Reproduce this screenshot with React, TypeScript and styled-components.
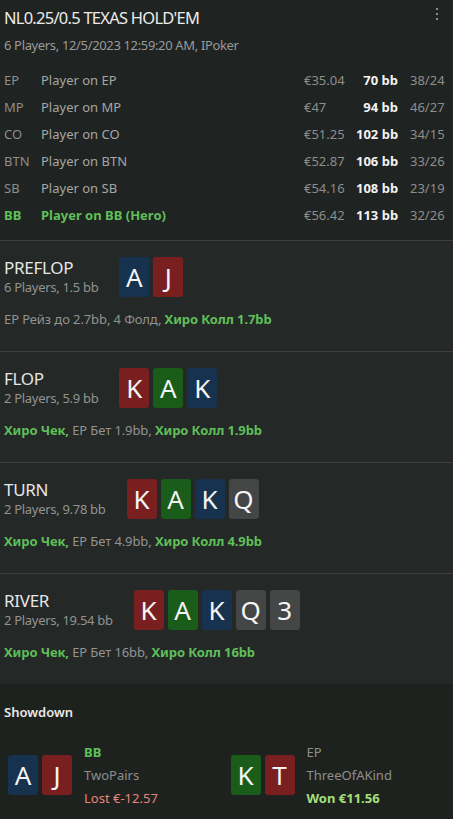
import React from "react";
import styled, { createGlobalStyle } from "styled-components";

const GlobalStyle = createGlobalStyle`
  html, body {
    margin: 0;
    padding: 0;
    background: #1f2321;
  }
  body {
    font-family: "Noto Sans", "Open Sans", sans-serif;
    color: #e6e6e6;
  }
`;

const Page = styled.div`
  width: 453px;
  min-height: 819px;
  display: flex;
  flex-direction: column;
  background: #1f2321;
`;

const Header = styled.div`
  padding: 6px 4px 0;
`;

const TitleRow = styled.div`
  display: flex;
  justify-content: space-between;
  align-items: flex-start;
`;

const Title = styled.div`
  font-size: 16.5px;
  line-height: 24px;
  letter-spacing: -0.75px;
  color: #ececec;
`;

const MenuButton = styled.div`
  display: flex;
  flex-direction: column;
  gap: 3px;
  padding: 2px 11px 0 0;
`;

const Dot = styled.span`
  width: 2px;
  height: 2px;
  background: #8a8a8a;
`;

const Subtitle = styled.div`
  font-size: 13px;
  line-height: 20px;
  letter-spacing: -0.35px;
  color: #9a9a9a;
  margin-top: 5px;
`;

const PlayerTable = styled.div`
  display: grid;
  grid-template-columns: 37px 1fr 52px 42px 46px;
  grid-auto-rows: 27px;
  align-items: center;
  padding: 11px 9px 12px 4px;
  font-size: 13px;
`;

const Cell = styled.div<{ $hero?: boolean; $tone?: "dim" | "name" | "bold" }>`
  white-space: nowrap;
  color: ${(p) =>
    p.$hero ? "#5fbf5a" : p.$tone === "bold" ? "#f2f2f2" : p.$tone === "name" ? "#a6a6a6" : "#8e8e8e"};
  font-weight: ${(p) => (p.$hero || p.$tone === "bold" ? 700 : 400)};
`;

const BbCell = styled(Cell)`
  text-align: right;
`;

const StatCell = styled(Cell)`
  padding-left: 12px;
`;

const Street = styled.section`
  background: #242826;
  border-top: 1px solid #3b3e3d;
  padding: 16px 4px 22px;
`;

const StreetHead = styled.div`
  display: flex;
  align-items: center;
  gap: 21px;
  height: 40px;
`;

const StreetInfo = styled.div`
  display: flex;
  flex-direction: column;
`;

const StreetName = styled.div`
  font-size: 17px;
  line-height: 21px;
  letter-spacing: -0.3px;
  color: #e6e6e6;
`;

const StreetMeta = styled.div`
  font-size: 13px;
  line-height: 19px;
  letter-spacing: -0.3px;
  color: #939393;
`;

const Cards = styled.div`
  display: flex;
  gap: 4px;
`;

const suitColor = {
  blue: "#16324f",
  red: "#7a1f1f",
  green: "#1a5c1a",
  gray: "#444545",
};

type Suit = keyof typeof suitColor;

const Card = styled.div<{ $suit: Suit }>`
  width: 30px;
  height: 40px;
  border-radius: 3px;
  background: ${(p) => suitColor[p.$suit]};
  color: #f4f4f4;
  font-size: 26px;
  line-height: 40px;
  text-align: center;
`;

const Actions = styled.div`
  margin-top: 12px;
  font-size: 13px;
  line-height: 20px;
  letter-spacing: -0.1px;
  color: #939393;
  white-space: nowrap;
`;

const Hero = styled.span`
  color: #5fbf5a;
  font-weight: 700;
`;

const Showdown = styled.section`
  flex: 1;
  background: #1e221f;
  padding: 18px 4px 12px;
`;

const ShowdownTitle = styled.div`
  font-size: 13px;
  line-height: 20px;
  font-weight: 600;
  color: #e8e8e8;
`;

const Hands = styled.div`
  display: grid;
  grid-template-columns: 1fr 1fr;
  margin-top: 20px;
`;

const Hand = styled.div`
  display: flex;
  align-items: center;
  gap: 12px;
  padding-left: 4px;
`;

const HandInfo = styled.div`
  display: flex;
  flex-direction: column;
  gap: 3px;
  font-size: 13px;
  line-height: 20px;
`;

const HandPos = styled.div<{ $hero?: boolean }>`
  color: ${(p) => (p.$hero ? "#5fbf5a" : "#8e8e8e")};
  font-weight: ${(p) => (p.$hero ? 700 : 400)};
`;

const HandRank = styled.div`
  color: #8e8e8e;
`;

const Result = styled.div<{ $won?: boolean }>`
  color: ${(p) => (p.$won ? "#a3e07a" : "#e8857a")};
  font-weight: ${(p) => (p.$won ? 700 : 400)};
`;

type CardData = [string, Suit];

const players = [
  { pos: "EP", name: "Player on EP", stack: "€35.04", bb: "70 bb", stat: "38/24" },
  { pos: "MP", name: "Player on MP", stack: "€47", bb: "94 bb", stat: "46/27" },
  { pos: "CO", name: "Player on CO", stack: "€51.25", bb: "102 bb", stat: "34/15" },
  { pos: "BTN", name: "Player on BTN", stack: "€52.87", bb: "106 bb", stat: "33/26" },
  { pos: "SB", name: "Player on SB", stack: "€54.16", bb: "108 bb", stat: "23/19" },
  { pos: "BB", name: "Player on BB (Hero)", stack: "€56.42", bb: "113 bb", stat: "32/26", hero: true },
];

const board: CardData[] = [
  ["K", "red"],
  ["A", "green"],
  ["K", "blue"],
  ["Q", "gray"],
  ["3", "gray"],
];

const streets = [
  {
    name: "PREFLOP",
    meta: "6 Players, 1.5 bb",
    cards: [["A", "blue"], ["J", "red"]] as CardData[],
    actions: (
      <>
        EP Рейз до 2.7bb, 4 Фолд, <Hero>Хиро Колл 1.7bb</Hero>
      </>
    ),
  },
  {
    name: "FLOP",
    meta: "2 Players, 5.9 bb",
    cards: board.slice(0, 3),
    actions: (
      <>
        <Hero>Хиро Чек,</Hero> EP Бет 1.9bb, <Hero>Хиро Колл 1.9bb</Hero>
      </>
    ),
  },
  {
    name: "TURN",
    meta: "2 Players, 9.78 bb",
    cards: board.slice(0, 4),
    actions: (
      <>
        <Hero>Хиро Чек,</Hero> EP Бет 4.9bb, <Hero>Хиро Колл 4.9bb</Hero>
      </>
    ),
  },
  {
    name: "RIVER",
    meta: "2 Players, 19.54 bb",
    cards: board,
    actions: (
      <>
        <Hero>Хиро Чек,</Hero> EP Бет 16bb, <Hero>Хиро Колл 16bb</Hero>
      </>
    ),
  },
];

const CardRow: React.FC<{ cards: CardData[] }> = ({ cards }) => (
  <Cards>
    {cards.map(([rank, suit], i) => (
      <Card key={i} $suit={suit}>
        {rank}
      </Card>
    ))}
  </Cards>
);

const App: React.FC = () => {
  return (
    <>
      <GlobalStyle />
      <Page>
        <Header>
          <TitleRow>
            <Title>NL0.25/0.5 TEXAS HOLD'EM</Title>
            <MenuButton>
              <Dot />
              <Dot />
              <Dot />
            </MenuButton>
          </TitleRow>
          <Subtitle>6 Players, 12/5/2023 12:59:20 AM, IPoker</Subtitle>
        </Header>
        <PlayerTable>
          {players.map((p) => (
            <React.Fragment key={p.pos}>
              <Cell $hero={p.hero}>{p.pos}</Cell>
              <Cell $hero={p.hero} $tone="name">
                {p.name}
              </Cell>
              <Cell>{p.stack}</Cell>
              <BbCell $tone="bold">{p.bb}</BbCell>
              <StatCell>{p.stat}</StatCell>
            </React.Fragment>
          ))}
        </PlayerTable>
        {streets.map((s) => (
          <Street key={s.name}>
            <StreetHead>
              <StreetInfo>
                <StreetName>{s.name}</StreetName>
                <StreetMeta>{s.meta}</StreetMeta>
              </StreetInfo>
              <CardRow cards={s.cards} />
            </StreetHead>
            <Actions>{s.actions}</Actions>
          </Street>
        ))}
        <Showdown>
          <ShowdownTitle>Showdown</ShowdownTitle>
          <Hands>
            <Hand>
              <CardRow cards={[["A", "blue"], ["J", "red"]]} />
              <HandInfo>
                <HandPos $hero>BB</HandPos>
                <HandRank>TwoPairs</HandRank>
                <Result>Lost €-12.57</Result>
              </HandInfo>
            </Hand>
            <Hand>
              <CardRow cards={[["K", "green"], ["T", "red"]]} />
              <HandInfo>
                <HandPos>EP</HandPos>
                <HandRank>ThreeOfAKind</HandRank>
                <Result $won>Won €11.56</Result>
              </HandInfo>
            </Hand>
          </Hands>
        </Showdown>
      </Page>
    </>
  );
};

export default App;
